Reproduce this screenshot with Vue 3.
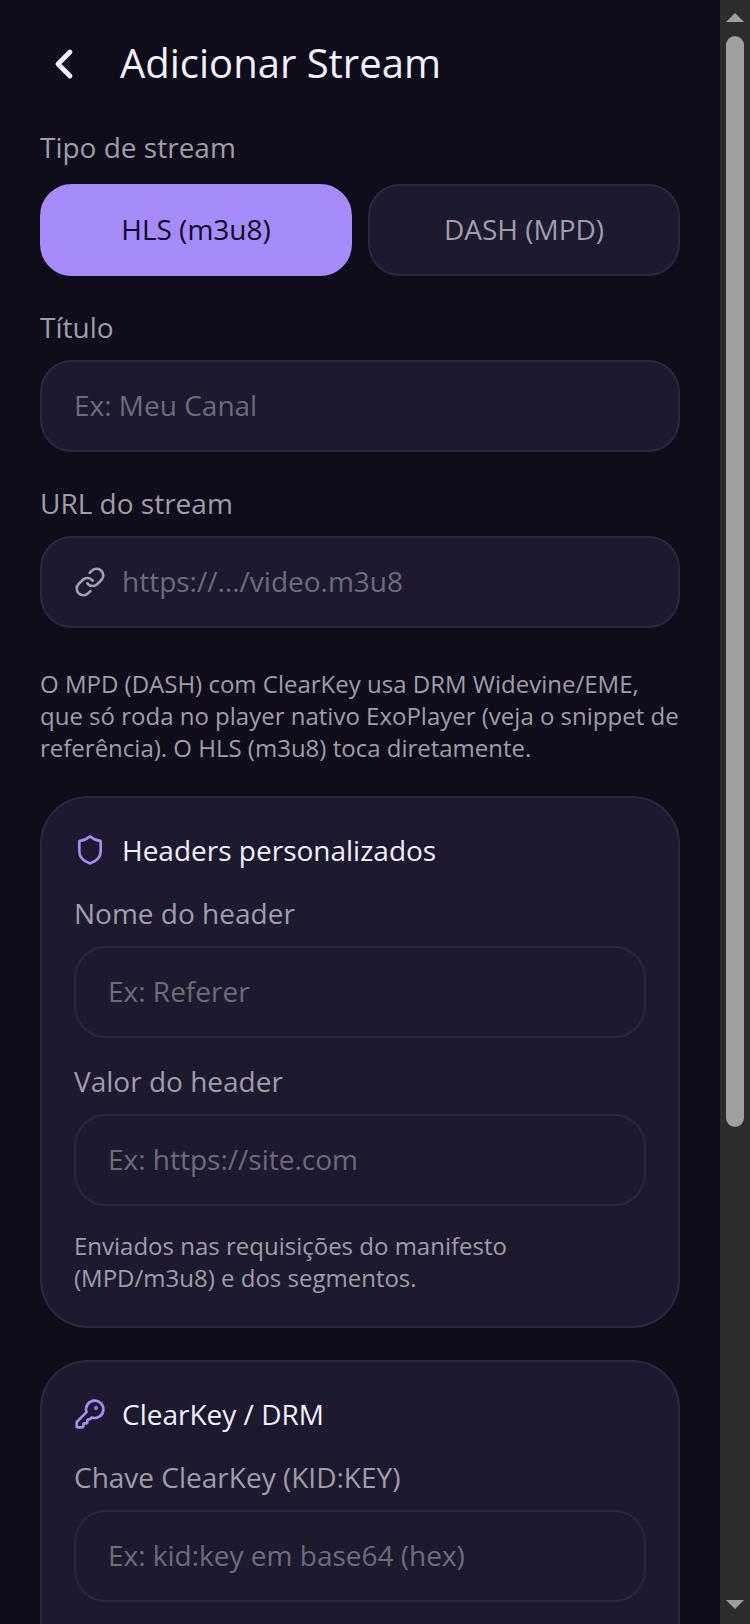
<template>
  <div class="app-shell">
    <main class="page">
      <header class="page-header">
        <button type="button" class="back-btn" aria-label="Voltar">
          <svg viewBox="0 0 24 24" class="back-icon"><path d="m15 18-6-6 6-6" /></svg>
        </button>
        <h1>Adicionar Stream</h1>
      </header>

      <form class="stream-form" @submit.prevent>
        <!-- stream type -->
        <div class="type-group" role="group" aria-labelledby="type-label">
          <span id="type-label" class="label">Tipo de stream</span>
          <div class="type-buttons">
            <button
              v-for="type in streamTypes"
              :key="type.id"
              type="button"
              class="type-btn"
              :class="{ active: selectedType === type.id }"
              :aria-pressed="selectedType === type.id"
              @click="selectedType = type.id"
            >
              {{ type.name }}
            </button>
          </div>
        </div>

        <div class="field">
          <label for="title" class="label">Título</label>
          <div class="input-box">
            <input id="title" v-model="form.title" type="text" placeholder="Ex: Meu Canal" />
          </div>
        </div>

        <div class="field">
          <label for="url" class="label">URL do stream</label>
          <div class="input-box">
            <svg viewBox="0 0 24 24" class="icon">
              <path d="M10 13a5 5 0 0 0 7.54.54l3-3a5 5 0 0 0-7.07-7.07l-1.72 1.71" />
              <path d="M14 11a5 5 0 0 0-7.54-.54l-3 3a5 5 0 0 0 7.07 7.07l1.71-1.71" />
            </svg>
            <input id="url" v-model="form.url" type="text" placeholder="https://.../video.m3u8" />
          </div>
        </div>

        <p class="hint form-hint">
          O MPD (DASH) com ClearKey usa DRM Widevine/EME, que só roda no player nativo ExoPlayer
          (veja o snippet de referência). O HLS (m3u8) toca diretamente.
        </p>

        <!-- custom headers -->
        <section class="card">
          <h2 class="card-title">
            <svg viewBox="0 0 24 24" class="icon accent">
              <path
                d="M20 13c0 5-3.5 7.5-7.66 8.95a1 1 0 0 1-.67-.01C7.5 20.5 4 18 4 13V6a1 1 0 0 1 1-1c2 0 4.5-1.2 6.24-2.72a1.17 1.17 0 0 1 1.52 0C14.51 3.81 17 5 19 5a1 1 0 0 1 1 1z"
              />
            </svg>
            Headers personalizados
          </h2>
          <div class="field">
            <label for="header-name" class="label">Nome do header</label>
            <div class="input-box">
              <input id="header-name" v-model="form.headerName" type="text" placeholder="Ex: Referer" />
            </div>
          </div>
          <div class="field">
            <label for="header-value" class="label">Valor do header</label>
            <div class="input-box">
              <input
                id="header-value"
                v-model="form.headerValue"
                type="text"
                placeholder="Ex: https://site.com"
              />
            </div>
          </div>
          <p class="hint">Enviados nas requisições do manifesto (MPD/m3u8) e dos segmentos.</p>
        </section>

        <!-- drm -->
        <section class="card drm-card">
          <h2 class="card-title">
            <svg viewBox="0 0 24 24" class="icon accent">
              <path
                d="M2.586 17.414A2 2 0 0 0 2 18.828V21a1 1 0 0 0 1 1h3a1 1 0 0 0 1-1v-1a1 1 0 0 1 1-1h1a1 1 0 0 0 1-1v-1a1 1 0 0 1 1-1h.172a2 2 0 0 0 1.414-.586l.814-.814a6.5 6.5 0 1 0-4-4z"
              />
              <circle cx="16.5" cy="7.5" r=".5" fill="currentColor" />
            </svg>
            ClearKey / DRM
          </h2>
          <div class="field">
            <label for="clear-key" class="label">Chave ClearKey (KID:KEY)</label>
            <div class="input-box">
              <input
                id="clear-key"
                v-model="form.clearKey"
                type="text"
                placeholder="Ex: kid:key em base64 (hex)"
              />
            </div>
          </div>
        </section>
      </form>
    </main>

    <div class="scrollbar" aria-hidden="true">
      <svg viewBox="0 0 18 9" class="scroll-arrow"><path d="M9 0l9 9H0z" /></svg>
      <div class="scroll-track">
        <div class="scroll-thumb" :style="{ height: thumbHeight }"></div>
      </div>
      <svg viewBox="0 0 18 9" class="scroll-arrow"><path d="M0 0h18L9 9z" /></svg>
    </div>
  </div>
</template>

<script setup>
  import { computed, reactive, ref } from 'vue';

  const streamTypes = [
    { id: 'hls', name: 'HLS (m3u8)' },
    { id: 'dash', name: 'DASH (MPD)' },
  ];
  const selectedType = ref('hls');

  const form = reactive({
    title: '',
    url: '',
    headerName: '',
    headerValue: '',
    clearKey: '',
  });

  // scrollbar: how much of the page is visible
  const visibleRatio = ref(0.704);
  const thumbHeight = computed(() => `${visibleRatio.value * 100}%`);
</script>

<style>
  body {
    background: #0f0d1a;
  }
</style>

<style scoped>
  * {
    box-sizing: border-box;
  }

  .app-shell {
    display: flex;
    height: 100vh;
    overflow: hidden;
    background: #0f0d1a;
    color: #f3f0ff;
    font-family: 'Open Sans', 'Noto Sans', sans-serif;
    font-size: 28px;
    line-height: 38px;
  }

  .page {
    flex: 1;
    min-width: 0;
    padding: 40px;
    overflow: hidden;
  }

  .page-header {
    display: flex;
    align-items: flex-start;
    gap: 32px;
    margin-bottom: 40px;
  }

  .page-header h1 {
    margin: 0;
    font-size: 40px;
    font-weight: 400;
    line-height: 46px;
  }

  .back-btn {
    display: flex;
    padding: 0;
    border: none;
    background: none;
    color: inherit;
    cursor: pointer;
  }

  .back-icon,
  .icon {
    flex: none;
    fill: none;
    stroke: currentColor;
    stroke-width: 2;
    stroke-linecap: round;
    stroke-linejoin: round;
  }

  .back-icon {
    width: 48px;
    height: 48px;
    stroke-width: 2.4;
  }

  .icon {
    width: 32px;
    height: 32px;
    color: #a19eae;
  }

  .icon.accent {
    color: #a78bfa;
  }

  .stream-form {
    display: flex;
    flex-direction: column;
    gap: 32px;
  }

  .label {
    color: #a09da9;
  }

  .type-group {
    display: flex;
    flex-direction: column;
    gap: 18px;
  }

  .type-buttons {
    display: flex;
    gap: 16px;
  }

  .type-btn {
    flex: 1;
    padding: 24px 24px 26px;
    border: 2px solid #2b2740;
    border-radius: 32px;
    background: #1d192e;
    color: #a09da9;
    font: inherit;
    cursor: pointer;
  }

  .type-btn.active {
    border-color: #a78bfa;
    background: #a78bfa;
    color: #110b20;
  }

  .field {
    display: flex;
    flex-direction: column;
    gap: 14px;
  }

  .input-box {
    display: flex;
    align-items: center;
    gap: 16px;
    padding: 24px 32px;
    border: 2px solid #2b2740;
    border-radius: 32px;
    background: #1d192e;
  }

  .input-box:focus-within {
    border-color: #a78bfa;
  }

  .input-box input {
    flex: 1;
    min-width: 0;
    height: 40px;
    padding: 0 0 2px;
    border: none;
    outline: none;
    background: transparent;
    color: inherit;
    font: inherit;
  }

  .input-box input::placeholder {
    color: #6e6b79;
    opacity: 1;
  }

  .hint {
    margin: 0;
    color: #a09da9;
    font-size: 24px;
    line-height: 32px;
  }

  .form-hint {
    padding-top: 8px;
  }

  .card {
    display: flex;
    flex-direction: column;
    gap: 24px;
    padding: 32px;
    border: 2px solid #2b2740;
    border-radius: 48px;
    background: #1d192e;
  }

  .drm-card {
    padding-bottom: 120px;
  }

  .card-title {
    display: flex;
    align-items: center;
    gap: 16px;
    height: 40px;
    margin: 0;
    font-size: 28px;
    font-weight: 400;
  }

  /* scrollbar */
  .scrollbar {
    display: flex;
    flex: none;
    flex-direction: column;
    align-items: center;
    gap: 14px;
    width: 30px;
    padding: 13px 6px 15px;
    background: #2c2c2c;
  }

  .scroll-arrow {
    width: 18px;
    height: 9px;
    fill: #9f9f9f;
  }

  .scroll-track {
    flex: 1;
    width: 100%;
  }

  .scroll-thumb {
    border-radius: 9px;
    background: #9f9f9f;
  }
</style>
